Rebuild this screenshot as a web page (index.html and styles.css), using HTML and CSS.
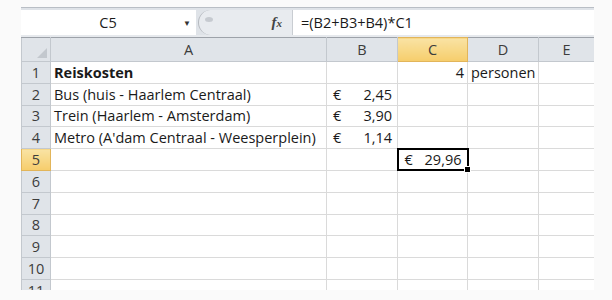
FILE: index.html
```html
<!DOCTYPE html>
<html lang="nl">
<head>
    <meta charset="UTF-8">
    <title>Reiskosten</title>
    <link rel="stylesheet" href="styles.css">
</head>
<body>
    <div class="window">
        <div class="formula-bar">
            <div class="name-box">
                <span class="cell-ref">C5</span>
                <span class="drop">&#9660;</span>
            </div>
            <div class="splitter">
                <span class="knob"></span>
                <span class="fx">f<small>x</small></span>
            </div>
            <div class="formula">=(B2+B3+B4)*C1</div>
        </div>

        <table class="sheet">
            <colgroup>
                <col class="c-row"><col class="c-a"><col class="c-b"><col class="c-c"><col class="c-d"><col class="c-e">
            </colgroup>
            <tr class="col-head">
                <th class="corner"><span class="tri"></span></th>
                <th>A</th><th>B</th><th class="active">C</th><th>D</th><th>E</th>
            </tr>
            <tr>
                <th>1</th><td class="bold">Reiskosten</td><td></td><td class="num">4</td><td class="over">personen</td><td></td>
            </tr>
            <tr>
                <th>2</th><td>Bus (huis - Haarlem Centraal)</td><td><span class="euro">€</span><span class="amt">2,45</span></td><td></td><td></td><td></td>
            </tr>
            <tr>
                <th>3</th><td>Trein (Haarlem - Amsterdam)</td><td><span class="euro">€</span><span class="amt">3,90</span></td><td></td><td></td><td></td>
            </tr>
            <tr>
                <th>4</th><td>Metro (A'dam Centraal - Weesperplein)</td><td><span class="euro">€</span><span class="amt">1,14</span></td><td></td><td></td><td></td>
            </tr>
            <tr>
                <th class="active">5</th><td></td><td></td><td class="selected"><span class="euro">€</span><span class="amt">29,96</span><span class="handle"></span></td><td></td><td></td>
            </tr>
            <tr><th>6</th><td></td><td></td><td></td><td></td><td></td></tr>
            <tr><th>7</th><td></td><td></td><td></td><td></td><td></td></tr>
            <tr><th>8</th><td></td><td></td><td></td><td></td><td></td></tr>
            <tr><th>9</th><td></td><td></td><td></td><td></td><td></td></tr>
            <tr><th>10</th><td></td><td></td><td></td><td></td><td></td></tr>
            <tr><th>11</th><td></td><td></td><td></td><td></td><td></td></tr>
        </table>
    </div>
</body>
</html>
```

FILE: styles.css
```css
body {
    margin: 0;
    padding: 7px 0 0 21px;
    background: #fafafa;
    font-family: 'Open Sans', 'Liberation Sans', sans-serif;
    font-size: 14.5px;
    color: #1a1a1a;
}

.window {
    width: 573px;
    height: 283px;
    overflow: hidden;
    background: #fff;
}

/* formula bar */

.formula-bar {
    display: flex;
    height: 25px;
    padding: 2px 0 0;
    background: #dfe3e8;
    border-top: 1px solid #b9bec5;
    border-bottom: 2px solid #e6e9ed;
}

.name-box {
    width: 175px;
    display: flex;
    align-items: center;
    background: #fff;
}

.cell-ref {
    flex: 1;
    text-align: center;
    padding-left: 12px;
}

.drop {
    font-size: 8px;
    color: #333;
    width: 13px;
}

.splitter {
    width: 94px;
    margin-left: 2px;
    display: flex;
    align-items: center;
    justify-content: space-between;
    background: #e8ebef;
    border-left: 1px solid #b4b8be;
    border-radius: 14px 0 0 14px;
    padding-left: 6px;
    box-sizing: border-box;
}

.knob {
    width: 8px;
    height: 5px;
    border-radius: 50%;
    background: #c6cad0;
    margin-top: -6px;
}

.fx {
    font-family: 'Liberation Serif', serif;
    font-style: italic;
    font-weight: bold;
    font-size: 15px;
    color: #444;
    padding-right: 10px;
}

.fx small {
    font-size: 11px;
}

.formula {
    flex: 1;
    background: #fff;
    padding-left: 8px;
    display: flex;
    align-items: center;
    border-left: 1px solid #c9cdd2;
}

/* sheet */

.sheet {
    border-collapse: collapse;
    table-layout: fixed;
    width: 573px;
}

.c-row { width: 29px; }
.c-a { width: 276px; }
.c-b { width: 71px; }
.c-c { width: 70px; }
.c-d { width: 71px; }
.c-e { width: 56px; }

.sheet tr {
    height: 21.8px;
}

.sheet .col-head {
    height: 24px;
}

.sheet th {
    background: #e0e4e9;
    font-weight: normal;
    color: #3c3c3c;
    font-size: 14.5px;
    border: 1px solid #c3c8ce;
    padding: 0;
    text-align: center;
}

.col-head th {
    border-top: 1px solid #9da2a9;
}

.sheet th.active {
    background: linear-gradient(#f9e3a4, #f6cd6b);
    border-color: #e2b55a;
}

.corner {
    position: relative;
}

.tri {
    position: absolute;
    right: 3px;
    bottom: 3px;
    border-left: 10px solid transparent;
    border-bottom: 10px solid #c3c8ce;
}

.sheet td {
    border: 1px solid #dadada;
    padding: 0 3px;
    white-space: nowrap;
    overflow: visible;
    position: relative;
}

.bold {
    font-weight: bold;
}

.num {
    text-align: right;
}

.over {
    padding-left: 3px;
}

.euro {
    float: left;
    padding-left: 3px;
}

.amt {
    float: right;
    padding-right: 2px;
}

.sheet td.selected {
    border: 2px solid #000;
}

.handle {
    position: absolute;
    right: -4px;
    bottom: -4px;
    width: 5px;
    height: 5px;
    background: #000;
    border: 1px solid #fff;
}
```
